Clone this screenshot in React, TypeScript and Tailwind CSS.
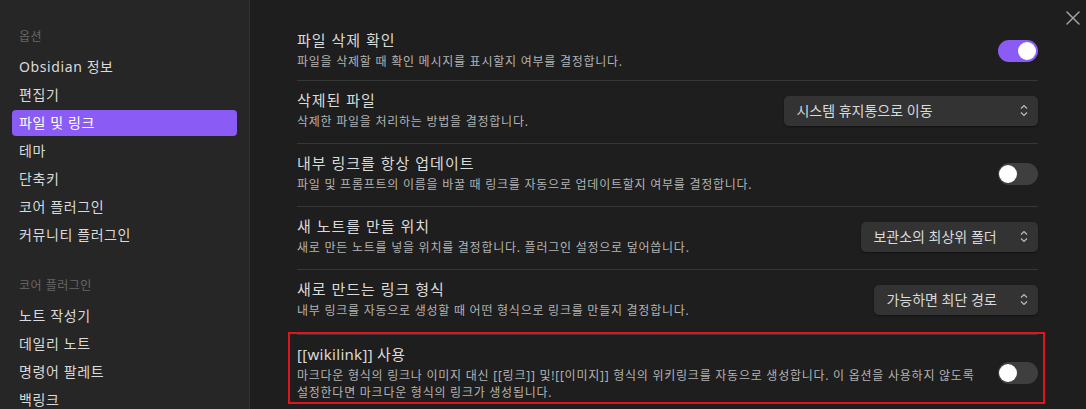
import { X } from 'lucide-react';

type Control =
  | { kind: 'toggle'; on: boolean }
  | { kind: 'dropdown'; value: string; width: string };

interface SettingRow {
  name: string;
  desc: string;
  control: Control;
}

const sidebarGroups = [
  {
    title: '옵션',
    items: ['Obsidian 정보', '편집기', '파일 및 링크', '테마', '단축키', '코어 플러그인', '커뮤니티 플러그인'],
  },
  {
    title: '코어 플러그인',
    items: ['노트 작성기', '데일리 노트', '명령어 팔레트', '백링크'],
  },
];

const rows: SettingRow[] = [
  {
    name: '파일 삭제 확인',
    desc: '파일을 삭제할 때 확인 메시지를 표시할지 여부를 결정합니다.',
    control: { kind: 'toggle', on: true },
  },
  {
    name: '삭제된 파일',
    desc: '삭제한 파일을 처리하는 방법을 결정합니다.',
    control: { kind: 'dropdown', value: '시스템 휴지통으로 이동', width: 'w-[254px]' },
  },
  {
    name: '내부 링크를 항상 업데이트',
    desc: '파일 및 프롬프트의 이름을 바꿀 때 링크를 자동으로 업데이트할지 여부를 결정합니다.',
    control: { kind: 'toggle', on: false },
  },
  {
    name: '새 노트를 만들 위치',
    desc: '새로 만든 노트를 넣을 위치를 결정합니다. 플러그인 설정으로 덮어씁니다.',
    control: { kind: 'dropdown', value: '보관소의 최상위 폴더', width: 'w-[177px]' },
  },
  {
    name: '새로 만드는 링크 형식',
    desc: '내부 링크를 자동으로 생성할 때 어떤 형식으로 링크를 만들지 결정합니다.',
    control: { kind: 'dropdown', value: '가능하면 최단 경로', width: 'w-[164px]' },
  },
];

function Toggle({ on }: { on: boolean }) {
  return (
    <div
      className={
        on
          ? 'relative h-[22px] w-[40px] shrink-0 rounded-full bg-[#8a5cf5]'
          : 'relative h-[22px] w-[40px] shrink-0 rounded-full bg-[#3f3f3f]'
      }
    >
      <div
        className={
          on
            ? 'absolute top-[2px] left-[20px] h-[18px] w-[18px] rounded-full bg-white'
            : 'absolute top-[2px] left-[1px] h-[18px] w-[18px] rounded-full bg-white'
        }
      />
    </div>
  );
}

function Dropdown({ value, width }: { value: string; width: string }) {
  return (
    <div
      className={`${width} flex h-[30px] shrink-0 items-center justify-between rounded-[5px] bg-[#333333] pr-[10px] pl-[12px] text-[14px] text-[#dadada] shadow-[0_1px_2px_rgba(0,0,0,0.4)]`}
    >
      <span className="leading-[20px]">{value}</span>
      <svg width="8" height="13" viewBox="0 0 8 13" fill="none" stroke="#bcbcbc" strokeWidth="1.2">
        <path d="M1 4.5 4 1.5 7 4.5" />
        <path d="M1 8.5 4 11.5 7 8.5" />
      </svg>
    </div>
  );
}

function Setting({ row, first }: { row: SettingRow; first: boolean }) {
  return (
    <div
      className={
        first
          ? 'flex items-center gap-6 pt-[12px] pb-[9px]'
          : 'flex items-center gap-6 border-t border-[#363636] pt-[9px] pb-[12px]'
      }
    >
      <div className="min-w-0 flex-1">
        <div className="text-[15px] leading-[20px] tracking-[1px] text-[#dadada]">{row.name}</div>
        <div className="mt-[3px] text-[12px] leading-[18px] tracking-[0.75px] text-[#b3b3b3]">{row.desc}</div>
      </div>
      {row.control.kind === 'toggle' ? (
        <Toggle on={row.control.on} />
      ) : (
        <Dropdown value={row.control.value} width={row.control.width} />
      )}
    </div>
  );
}

export default function App() {
  return (
    <div
      className="relative flex h-[409px] w-[1086px] overflow-hidden bg-[#1e1e1e]"
      style={{ fontFamily: '"Noto Sans", "Noto Sans CJK KR", sans-serif' }}
    >
      <aside className="w-[250px] shrink-0 border-r border-[#333333] bg-[#262626] pt-[28px] pr-[12px] pl-[12px]">
        {sidebarGroups.map((group, gi) => (
          <div key={group.title} className={gi > 0 ? 'mt-[29px]' : ''}>
            <div className="mb-[8px] pl-[7px] text-[12px] leading-[18px] tracking-[0.5px] text-[#666666]">
              {group.title}
            </div>
            {group.items.map((item) => (
              <div
                key={item}
                className={
                  item === '파일 및 링크'
                    ? 'mb-[2px] h-[26px] rounded-[4px] bg-[#8a5cf5] pl-[7px] text-[14px] leading-[26px] tracking-[0.6px] text-white'
                    : 'mb-[2px] h-[26px] pl-[7px] text-[14px] leading-[26px] tracking-[0.6px] text-[#dadada]'
                }
              >
                {item}
              </div>
            ))}
          </div>
        ))}
      </aside>

      <main className="flex-1 pt-[18px] pr-[48px] pl-[47px]">
        {rows.map((row, i) => (
          <Setting key={row.name} row={row} first={i === 0} />
        ))}

        <div className="-mr-[7px] -ml-[9px] border-2 border-[#e0141e] pr-[5px] pl-[7px]">
          <div className="flex items-center gap-6 border-t border-[#363636] pt-[9px] pb-[1px]">
            <div className="min-w-0 flex-1">
              <div className="text-[15px] leading-[20px] tracking-[0.3px] text-[#dadada]">[[wikilink]] 사용</div>
              <div className="mt-[3px] text-[12px] leading-[17px] tracking-[0.75px] whitespace-nowrap text-[#b3b3b3]">
                마크다운 형식의 링크나 이미지 대신 [[링크]] 및![[이미지]] 형식의 위키링크를 자동으로 생성합니다. 이 옵션을 사용하지 않도록
                <br />
                설정한다면 마크다운 형식의 링크가 생성됩니다.
              </div>
            </div>
            <Toggle on={false} />
          </div>
        </div>
      </main>

      <button className="absolute top-[6px] right-[1px] text-[#a3a3a3]">
        <X size={24} strokeWidth={1.5} />
      </button>
    </div>
  );
}
